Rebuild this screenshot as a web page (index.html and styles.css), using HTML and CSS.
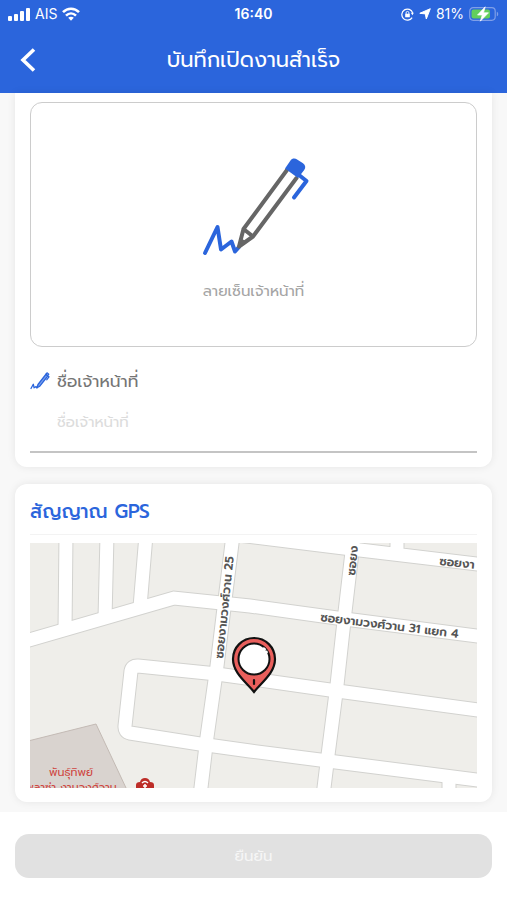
FILE: index.html
```
<!DOCTYPE html>
<html lang="th">
	<head>
		<meta charset="UTF-8">
		<meta name="viewport" content="width=device-width, initial-scale=1">
		<title>บันทึกเปิดงานสำเร็จ</title>
		<link rel="stylesheet" href="styles.css">
	</head>
	<body>
		<header class="header">
			<div class="status">
				<div class="status_left">
					<svg width="22" height="14" viewBox="0 0 22 14" fill="#fff" aria-hidden="true">
						<rect x="0" y="9" width="4" height="5" rx="1"/>
						<rect x="6" y="7" width="4" height="7" rx="1"/>
						<rect x="12" y="4" width="4" height="10" rx="1"/>
						<rect x="18" y="1" width="4" height="13" rx="1"/>
					</svg>
					<span>AIS</span>
					<svg width="18" height="14" viewBox="0 0 18 14" fill="none" stroke="#fff" stroke-width="2.6" aria-hidden="true">
						<path d="M1 5.2C5.500 .6 12.500 .6 17 5.200"/>
						<path d="M4 8.600c3-2.900 7-2.900 10 0"/>
						<path d="M9 13.700 6.200 10.700c1.600-1.400 4-1.400 5.600 0z" fill="#fff" stroke="none"/>
					</svg>
				</div>
				<div class="status_time">16:40</div>
				<div class="status_right">
					<svg width="13" height="13" viewBox="0 0 14 14" fill="none" stroke="#fff" aria-hidden="true">
						<path d="M12 10.300a6 6 0 1 1 .6-5" stroke-width="1.300"/>
						<path d="M10.600 5h3.200l-1.500 2.800z" fill="#fff" stroke="none"/>
						<rect x="4.500" y="6.300" width="5" height="3.700" rx=".6" fill="#fff" stroke="none"/>
						<path d="M5.500 6.500V5.200a1.500 1.500 0 0 1 3 0v1.300"/>
					</svg>
					<svg width="12" height="12" viewBox="0 0 12 12" fill="#fff" stroke="#fff" stroke-linejoin="round" aria-hidden="true">
						<path d="M11.300.700 7.300 11 6.300 5.900.800 5.300z"/>
					</svg>
					<span>81%</span>
					<svg width="30" height="16" viewBox="0 0 30 16" aria-hidden="true">
						<rect x=".7" y="1.700" width="25.500" height="12.600" rx="3.500" fill="none" stroke="#7f9fe8" stroke-width="1.200"/>
						<rect x="2.500" y="3.500" width="18.500" height="9" rx="2" fill="#62cf5c"/>
						<path d="M27.800 5.700c1.900.7 1.900 3.900 0 4.600z" fill="#7f9fe8"/>
						<path d="M16.200.8 8.500 9h4.800l-2 6.200 8.200-8.400h-5z" fill="#fff" stroke="#fff" stroke-width=".7"/>
					</svg>
				</div>
			</div>
			<div class="nav">
				<button class="back" type="button" aria-label="ย้อนกลับ">
					<svg width="16" height="24" viewBox="0 0 16 24" fill="none" stroke="#fff" stroke-width="3.600">
						<path d="M14 1.500 3 12l11 10.500"/>
					</svg>
				</button>
				<h1 class="nav_title">บันทึกเปิดงานสำเร็จ</h1>
			</div>
		</header>

		<main class="main">
			<section class="card card_sign">
				<button class="sign" type="button">
					<svg class="pen" width="106" height="100" viewBox="0 0 106 100" fill="none" stroke-linecap="round" stroke-linejoin="round" aria-hidden="true">
						<path d="M4 96 16.500 70l3.500 22.500 10.500-8 3.500 10 4-4.500" stroke="#2b65dc" stroke-width="4"/>
						<path d="M86 13 42.500 72l-4.500 17.500L52 79.500 95.500 21M42.500 72 52 79.500" stroke="#666" stroke-width="4"/>
						<path d="m38 89.500 1.500-7 5 2.500z" fill="#666" stroke="#666" stroke-width="2"/>
						<path d="m98 18 7.500 6L93 40.500" stroke="#2b65dc" stroke-width="4"/>
						<path d="m84 11.500 5.500-8c1.800-2.500 4.500-2.500 7-.8l5.500 3.500c2.500 1.800 3 4.300 1.200 6.800L97 21z" fill="#2b65dc"/>
					</svg>
					<span>ลายเซ็นเจ้าหน้าที่</span>
				</button>
				<div class="field">
					<svg width="20" height="18" viewBox="0 0 20 18" fill="none" stroke="#2b65dc" stroke-linecap="round" stroke-linejoin="round" aria-hidden="true">
						<path d="m1 16.500 2.300-4.300.8 3.600 2-1.300.8 1.500" stroke-width="1.300"/>
						<path d="M15.800 2.500 8 12.500 7 15.700l2.800-1.500L17.800 4z" fill="#7da2ed" stroke-width="1.300"/>
						<path d="m16 2 1-1.200 1.800 1.400-1 1.300zM18 4l1 .8-2.300 3" stroke-width="1.200"/>
					</svg>
					<label for="officer">ชื่อเจ้าหน้าที่</label>
					<input id="officer" name="officer" type="text" class="in" placeholder="ชื่อเจ้าหน้าที่">
				</div>
			</section>

			<section class="card">
				<h2 class="card_title">สัญญาณ GPS</h2>
				<svg class="map" viewBox="0 0 447 245" role="img" aria-label="แผนที่">
					<defs>
						<g id="roads">
							<path d="M-8 99 144 55 220 63 307 75 455 94"/>
							<path d="M36-8 35 88M77-8 75 76M116-8 110 64"/>
							<path d="M203-8 194 65 187 123 177 194 170 253"/>
							<path d="M324-8 315 69 307 142 298 212 293 253"/>
							<path d="M200-9 330 7 455 22M367-8v18"/>
							<path d="M455 168 300 147 187 131 108 123q-6-.5-7 5L95 183q-.5 6 5 7l70 11 50 7 78 10 157 20"/>
							<path d="M419 234v20"/>
						</g>
					</defs>
					<rect width="447" height="245" fill="#efeeea"/>
					<path d="M-2 198 66 181 97 247H-2z" fill="#d9d3cf" stroke="#c3bab4"/>
					<use href="#roads" class="road_edge"/>
					<use href="#roads" class="road"/>
					<g class="street">
						<text transform="translate(193 116) rotate(-84)">ซอยงามวงศ์วาน 25</text>
						<text transform="translate(325 33) rotate(-84)">ซอยง</text>
						<text transform="translate(409 22) rotate(6)">ซอยงา</text>
						<text transform="translate(290 78) rotate(7)">ซอยงามวงศ์วาน 31 แยก 4</text>
					</g>
					<g class="place">
						<text x="41" y="233">พันธุ์ทิพย์</text>
						<text x="41" y="248">พลาซ่า งามวงศ์วาน</text>
					</g>
					<path d="M106 242q0-3 4-3 1-4 5-4t5 4q4 0 4 3v6h-18z" fill="#bd2d28"/>
					<path d="M112 240q3-3 6 0M115 241v4M113 243h4" fill="none" stroke="#fff" stroke-width="1.500"/>
					<path d="M224 149C216 139 203 130 203 116a21 21 0 0 1 42 0c0 14-13 23-21 33z" fill="#e95f5c" stroke="#111" stroke-width="2.200"/>
					<circle cx="224" cy="116" r="15.500" fill="#fff" stroke="#111" stroke-width="2"/>
					<path d="M224 137v4" stroke="#111" stroke-width="2.200" stroke-linecap="round"/>
					<path d="M233 105q3 2 4 5" fill="none" stroke="#fff" stroke-width="2.500" stroke-dasharray="3 1"/>
				</svg>
			</section>
		</main>

		<footer class="footer">
			<button class="confirm" type="submit" disabled>ยืนยัน</button>
		</footer>
	</body>
</html>
```
FILE: styles.css
```
* {
	box-sizing: border-box;
}

body {
	margin: 0;
	min-height: 100vh;
	display: flex;
	flex-direction: column;
	background: #f8f8f8;
	font-family: Prompt, Kanit, "Noto Sans Thai", "Noto Sans", sans-serif;
	font-size: 17px;
	line-height: 24px;
	color: #757575;
}

button,
input {
	font: inherit;
}

svg {
	display: block;
	flex: none;
}

.header {
	background: #2b65dc;
	color: #fff;
}

.status {
	display: grid;
	grid-template-columns: 1fr auto 1fr;
	align-items: center;
	height: 28px;
	padding: 0 8px;
	font-family: Inter, "Liberation Sans", sans-serif;
	font-size: 14px;
}

.status_left,
.status_right {
	display: flex;
	align-items: center;
	gap: 5px;
}

.status_right {
	justify-content: flex-end;
}

.status_time {
	font-weight: 600;
}

.nav {
	display: grid;
	grid-template-columns: 40px 1fr 40px;
	align-items: center;
	height: 65px;
	padding: 0 8px 2px;
}

.back {
	display: flex;
	justify-content: center;
	padding: 8px;
	border: 0;
	background: none;
}

.nav_title {
	margin: 0;
	font-size: 21px;
	font-weight: 400;
	line-height: 32px;
	text-align: center;
}

.main {
	flex: 1;
	display: flex;
	flex-direction: column;
	gap: 17px;
	padding: 0 15px 10px;
}

.card {
	padding: 14px 15px;
	border-radius: 12px;
	background: #fff;
	box-shadow: 0 0 8px rgba(0, 0, 0, 0.08);
}

.card_sign {
	padding-top: 9px;
	border-radius: 0 0 12px 12px;
}

.sign {
	display: flex;
	flex-direction: column;
	align-items: center;
	justify-content: center;
	gap: 22px;
	width: 100%;
	height: 245px;
	padding: 10px 0 0;
	border: 1px solid #ccc;
	border-radius: 12px;
	background: #fff;
	color: #a5a5a5;
	font-size: 15px;
}

.pen {
	overflow: visible;
}

.field {
	display: grid;
	grid-template-columns: 20px 1fr;
	align-items: center;
	column-gap: 7px;
	padding-top: 22px;
	border-bottom: 2px solid #c4c4c4;
}

.in {
	grid-column: 2;
	width: 100%;
	height: 58px;
	padding: 0;
	border: 0;
	outline: none;
	background: none;
	color: #757575;
	font-size: 15px;
}

.in::placeholder {
	color: #dcdcdc;
	opacity: 1;
}

.card_title {
	margin: 0 0 8px;
	padding-bottom: 8px;
	border-bottom: 1px solid #f3f3f3;
	font-size: 19px;
	font-weight: 500;
	line-height: 28px;
	color: #2b65dc;
}

.map {
	width: 100%;
	height: auto;
	overflow: hidden;
}

.road_edge {
	fill: none;
	stroke: #d2d2cf;
	stroke-width: 15px;
}

.road {
	fill: none;
	stroke: #fff;
	stroke-width: 13px;
}

.street {
	font-size: 12px;
	font-weight: 600;
	fill: #555;
}

.place {
	font-size: 11px;
	text-anchor: middle;
	fill: #cf4540;
}

.footer {
	padding: 22px 15px;
	background: #fff;
}

.confirm {
	display: block;
	width: 100%;
	height: 44px;
	border: 0;
	border-radius: 14px;
	background: #e1e1e1;
	color: #f6f6f6;
	font-size: 15px;
}
```
